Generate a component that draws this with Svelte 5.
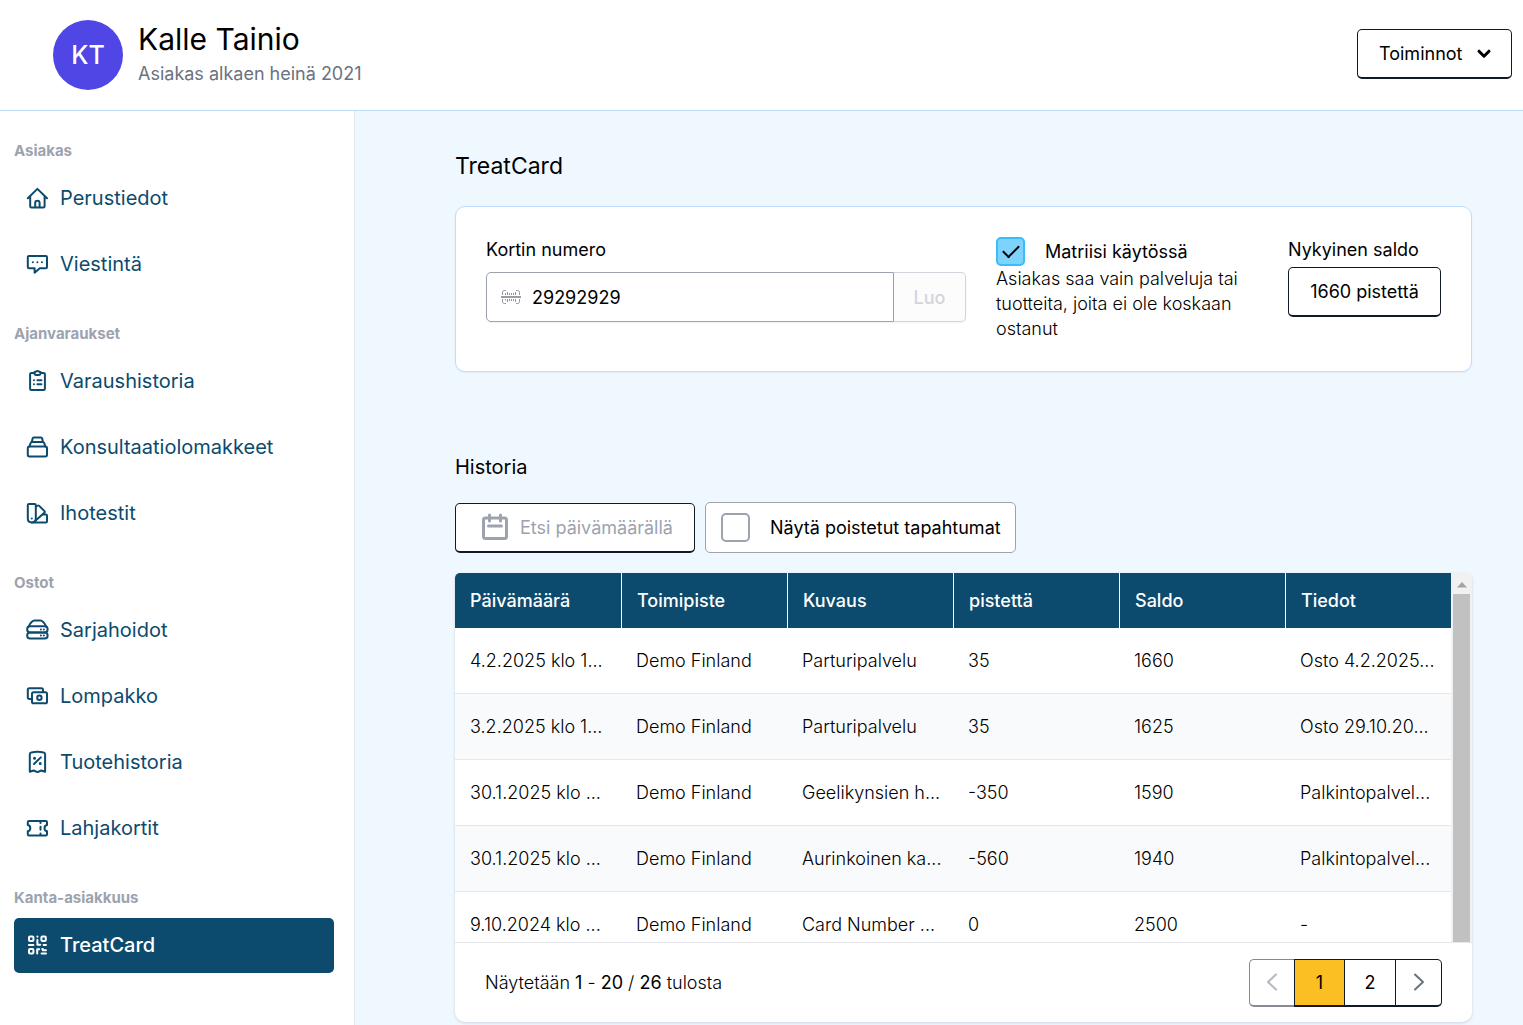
<script lang="ts">
  const GROUPS = [
    {
      title: 'Asiakas',
      items: [
        { icon: 'home', label: 'Perustiedot' },
        { icon: 'chat', label: 'Viestintä' },
      ],
    },
    {
      title: 'Ajanvaraukset',
      items: [
        { icon: 'clipboard', label: 'Varaushistoria' },
        { icon: 'stack', label: 'Konsultaatiolomakkeet' },
        { icon: 'swatch', label: 'Ihotestit' },
      ],
    },
    {
      title: 'Ostot',
      items: [
        { icon: 'series', label: 'Sarjahoidot' },
        { icon: 'wallet', label: 'Lompakko' },
        { icon: 'receipt', label: 'Tuotehistoria' },
        { icon: 'ticket', label: 'Lahjakortit' },
      ],
    },
    {
      title: 'Kanta-asiakkuus',
      items: [{ icon: 'qr', label: 'TreatCard' }],
    },
  ];

  const COLUMNS = ['Päivämäärä', 'Toimipiste', 'Kuvaus', 'pistettä', 'Saldo', 'Tiedot'];

  const ROWS = [
    ['4.2.2025 klo 1...', 'Demo Finland', 'Parturipalvelu', '35', '1660', 'Osto 4.2.2025...'],
    ['3.2.2025 klo 1...', 'Demo Finland', 'Parturipalvelu', '35', '1625', 'Osto 29.10.20...'],
    ['30.1.2025 klo ...', 'Demo Finland', 'Geelikynsien h...', '-350', '1590', 'Palkintopalvel...'],
    ['30.1.2025 klo ...', 'Demo Finland', 'Aurinkoinen ka...', '-560', '1940', 'Palkintopalvel...'],
    ['9.10.2024 klo ...', 'Demo Finland', 'Card Number ...', '0', '2500', '-'],
  ];

  let active = $state('TreatCard');
  let cardNumber = $state('29292929');
  let matrix = $state(true);
  let showDeleted = $state(false);
  let page = $state(1);
</script>

{#snippet icon(name: string)}
  <svg class="icon" viewBox="0 0 22 22" aria-hidden="true">
    {#if name === 'home'}
      <path d="M1.8 11.2 11.4 1.9 21 11.2M4.2 9.6v9.6c0 .7.5 1.2 1.2 1.2h12c.7 0 1.2-.5 1.2-1.2V9.6" />
      <path d="M9.200 20v-4.200c0-1.200 1-2 2.200-2s2.200.8 2.200 2V20" />
    {:else if name === 'chat'}
      <path d="M3 2.9h16.800c.7 0 1.200.5 1.200 1.200v10c0 .7-.5 1.200-1.200 1.200h-6L8.600 19.700v-4.400H3c-.7 0-1.200-.5-1.200-1.200v-10c0-.7.5-1.200 1.200-1.200z" />
      <path class="dots" d="M6.900 9.200h.01M11.400 9.200h.01M15.900 9.200h.01" />
    {:else if name === 'clipboard'}
      <path d="M8 2.900H5.400c-.7 0-1.300.6-1.300 1.300v14.500c0 .7.6 1.300 1.300 1.300h12.200c.7 0 1.300-.6 1.300-1.300V4.200c0-.7-.6-1.300-1.300-1.300H15" />
      <path d="M9.300 1.900c.4-.7 1.200-1 2.200-1s1.800.3 2.200 1h.8v1.700c0 .8-.6 1.400-1.400 1.400H9.900c-.8 0-1.400-.6-1.400-1.400V1.900z" />
      <path d="M11.400 10.300h4M11.400 14.300h4" />
      <path class="dots" d="M8 10.300h.01M8 14.300h.01" />
    {:else if name === 'stack'}
      <rect x="1.8" y="10.6" width="19.2" height="9.8" rx="1.6" />
      <path d="M3.400 10.500 4.700 6.900c.2-.6.600-.9 1.200-.9h11c.6 0 1 .3 1.200.9l1.300 3.600M5.900 5.800l.8-3.500c.1-.6.600-.9 1.200-.9h7c.6 0 1.100.3 1.200.9l.8 3.500" />
    {:else if name === 'swatch'}
      <path d="M3 1.900h5.600c.7 0 1.200.5 1.200 1.200v13.100c0 2.500-1.500 4.200-4 4.200s-4-1.700-4-4.200V3.100c0-.7.5-1.200 1.200-1.200z" />
      <path d="M9.900 4.300l1.900-.7c.5-.2 1-.1 1.400.3l5.300 5.200c.4.4.4 1 .1 1.500L8.600 19.400" />
      <path d="M17 12.600h2.800c.7 0 1.200.5 1.200 1.200v5.400c0 .7-.5 1.200-1.200 1.200h-14" />
      <path class="dots" d="M5.800 16.400h.01" />
    {:else if name === 'series'}
      <rect x="1.200" y="7.200" width="20.400" height="6.200" rx="2.800" />
      <rect x="1.200" y="13.400" width="20.400" height="6.200" rx="2.800" />
      <path d="M2.600 7.700c1.700-3.700 3.500-6.100 6-6.100h5.600c2.500 0 4.300 2.400 6 6.100" />
      <path class="dots" d="M14.900 10.400h.01M17.900 10.400h.01M14.900 16.500h.01M17.900 16.500h.01" />
    {:else if name === 'wallet'}
      <path d="M5 14h-1.600c-.9 0-1.600-.7-1.600-1.600V4.800c0-.9.700-1.600 1.600-1.600h12c.9 0 1.600.7 1.600 1.600v1.600" />
      <rect x="6" y="7.300" width="15" height="11" rx="1.600" />
      <circle cx="13.400" cy="12.800" r="2.200" />
    {:else if name === 'receipt'}
      <path d="M3.800 20.800V3.200c0-1 .6-1.600 1.500-1.800C9 .7 14 .7 17.600 1.400c.9.200 1.500.8 1.500 1.800v17.600l-3.800-1.300-3.800 1.700-3.900-1.700z" />
      <path d="M8 13l6.800-6.600" />
      <path class="dots big" d="M8.500 7.200h.01M14.200 12.500h.01" />
    {:else if name === 'ticket'}
      <path d="M3 4h16.800c.7 0 1.200.5 1.200 1.200v2.900c-1.600.3-2.500 1.500-2.500 3.100s.9 2.800 2.500 3.100v2.900c0 .7-.5 1.200-1.200 1.200H3c-.7 0-1.200-.5-1.200-1.200v-2.900c1.600-.3 2.500-1.500 2.500-3.100S3.400 8.400 1.800 8.100V5.200C1.800 4.500 2.300 4 3 4z" />
      <path d="M14.500 4.500v1.500M14.500 9.700v3M14.500 16.500v1.500" />
    {:else}
      <rect x="3" y="2.600" width="4.400" height="4.400" rx="1" />
      <rect x="15.400" y="2.600" width="4.400" height="4.400" rx="1" />
      <rect x="3" y="15" width="4.400" height="4.400" rx="1" />
      <path d="M11.400 2.600v.1M11.400 6v4.800h2.800M2.900 11h4.500M17.600 11h2.400M11.200 19.400v-4.200h2M16.200 15h.6v1.200h3.200M15.600 19.500h4.400" />
    {/if}
  </svg>
{/snippet}

<div class="app">
  <header class="topbar">
    <div class="avatar">KT</div>
    <div class="who">
      <h1>Kalle Tainio</h1>
      <p>Asiakas alkaen heinä 2021</p>
    </div>
    <button class="btn actions">
      Toiminnot
      <svg class="caret" viewBox="0 0 14 10" aria-hidden="true"><path d="M2 2.200 7 7.200l5-5" /></svg>
    </button>
  </header>

  <div class="body">
    <nav class="sidebar">
      {#each GROUPS as g}
        <section class="group">
          <h2>{g.title}</h2>
          <ul>
            {#each g.items as it}
              <li>
                <a href="#{it.icon}" class:active={active === it.label} onclick={() => (active = it.label)}>
                  {@render icon(it.icon)}
                  <span>{it.label}</span>
                </a>
              </li>
            {/each}
          </ul>
        </section>
      {/each}
    </nav>

    <main>
      <h2 class="title">TreatCard</h2>

      <section class="card">
        <div class="number">
          <label for="card-number">Kortin numero</label>
          <div class="field">
            <div class="input-wrap">
              <svg class="barcode" viewBox="0 0 20 14" aria-hidden="true">
                <path class="frame" d="M1.500 5V2.500C1.500 1.200 2.200.5 3.500.5h1.500M1.500 9v2.500c0 1.300.7 2 2 2h1.500M18.500 5V2.500c0-1.300-.7-2-2-2h-1.500M18.500 9v2.500c0 1.300-.7 2-2 2h-1.500" />
                <path class="line" d="M0 7h20" />
                <path class="bars" d="M4.500 3v2M6.500 2v3M8.500 3v2M10.500 3v2M12.500 3v2M14.500 2v3M4.500 9v1.500M6.500 9v3M8.500 9v2M10.500 9v2M12.500 9v2M14.500 9v3" />
              </svg>
              <input id="card-number" type="text" bind:value={cardNumber} />
            </div>
            <button class="create" disabled>Luo</button>
          </div>
        </div>

        <div class="matrix">
          <label class="check">
            <input type="checkbox" bind:checked={matrix} />
            Matriisi käytössä
          </label>
          <p>Asiakas saa vain palveluja tai tuotteita, joita ei ole koskaan ostanut</p>
        </div>

        <div class="balance">
          <span>Nykyinen saldo</span>
          <button class="btn">1660 pistettä</button>
        </div>
      </section>

      <h3>Historia</h3>

      <div class="filters">
        <button class="btn date">
          <svg viewBox="0 0 26 26" aria-hidden="true">
            <rect x="1.500" y="4" width="23" height="20.500" rx="2" />
            <path d="M7.500 1v6M18.500 1v6M6.500 12h13" />
          </svg>
          Etsi päivämäärällä
        </button>
        <label class="check boxed">
          <input type="checkbox" bind:checked={showDeleted} />
          Näytä poistetut tapahtumat
        </label>
      </div>

      <section class="history">
        <div class="scroller">
          <div class="viewport">
            <table>
              <thead>
                <tr>
                  {#each COLUMNS as c}
                    <th scope="col">{c}</th>
                  {/each}
                </tr>
              </thead>
              <tbody>
                {#each ROWS as r}
                  <tr>
                    {#each r as cell}
                      <td>{cell}</td>
                    {/each}
                  </tr>
                {/each}
              </tbody>
            </table>
          </div>
          <div class="track" aria-hidden="true">
            <svg viewBox="0 0 10 6"><path d="M5 0l5 5.500H0z" /></svg>
            <div class="thumb"></div>
          </div>
        </div>

        <footer>
          <p>Näytetään <b>1</b> - <b>20</b> / <b>26</b> tulosta</p>
          <div class="pager">
            <button disabled={page === 1} aria-label="Edellinen" onclick={() => (page -= 1)}>
              <svg viewBox="0 0 12 18" aria-hidden="true"><path d="M10 1.500 2 9l8 7.500" /></svg>
            </button>
            {#each [1, 2] as n}
              <button class="num" class:current={page === n} onclick={() => (page = n)}>{n}</button>
            {/each}
            <button disabled={page === 2} aria-label="Seuraava" onclick={() => (page += 1)}>
              <svg viewBox="0 0 12 18" aria-hidden="true"><path d="M2 1.500 10 9l-8 7.500" /></svg>
            </button>
          </div>
        </footer>
      </section>
    </main>
  </div>
</div>

<style>
  :global(body) {
    margin: 0;
    background: #fff;
  }
  .app {
    display: flex;
    flex-direction: column;
    min-height: 100vh;
    font-family: Inter, sans-serif;
    font-size: 18px;
    line-height: 25px;
    color: #000;
  }
  .app :global(*) {
    box-sizing: border-box;
  }
  h1,
  h2,
  h3,
  p,
  ul {
    margin: 0;
    padding: 0;
    font-weight: 400;
  }
  button,
  input {
    font: inherit;
    color: inherit;
    margin: 0;
  }
  svg {
    display: block;
    flex: none;
    fill: none;
    stroke: currentColor;
    stroke-linecap: round;
    stroke-linejoin: round;
    overflow: visible;
  }

  .topbar {
    display: flex;
    align-items: center;
    height: 111px;
    padding: 0 11px 0 53px;
    border-bottom: 1px solid #bfdbfe;
  }
  .avatar {
    display: grid;
    place-items: center;
    width: 70px;
    height: 70px;
    margin-right: 15px;
    border-radius: 50%;
    background: #4f46e5;
    color: #fff;
    font-size: 25px;
    font-weight: 500;
  }
  .who {
    flex: 1;
    padding-bottom: 3px;
  }
  .who h1 {
    font-size: 30px;
    line-height: 40px;
  }
  .who p {
    color: #6b7280;
    line-height: 29px;
  }
  .btn {
    height: 50px;
    padding: 0 20px;
    background: #fff;
    border: 1px solid #111827;
    border-bottom-width: 2px;
    border-radius: 5px;
    cursor: pointer;
  }
  .actions {
    display: flex;
    align-items: center;
    justify-content: space-between;
    width: 155px;
    padding: 0 20px 0 21px;
    margin-bottom: 2px;
  }
  .caret {
    width: 14px;
    height: 10px;
    stroke-width: 3;
  }

  .body {
    display: flex;
    flex: 1;
  }
  .sidebar {
    flex: none;
    width: 355px;
    padding: 30px 20px 0 14px;
    border-right: 1px solid #e2e8f0;
  }
  .group {
    margin-bottom: 32px;
  }
  .group h2 {
    margin-bottom: 10px;
    font-size: 15px;
    line-height: 20px;
    font-weight: 700;
    color: #9ca3af;
  }
  .group ul {
    display: flex;
    flex-direction: column;
    gap: 11px;
    list-style: none;
  }
  .group a {
    display: flex;
    align-items: center;
    gap: 12px;
    height: 55px;
    padding: 0 12px;
    border-radius: 5px;
    color: #0c4a6e;
    font-size: 20px;
    text-decoration: none;
  }
  .group a.active {
    background: #0c4a6e;
    color: #fff;
    font-weight: 500;
  }
  .icon {
    width: 22px;
    height: 22px;
    margin-bottom: 1px;
    stroke-width: 2;
  }
  .dots {
    stroke-width: 2;
  }
  .dots.big {
    stroke-width: 3;
  }

  main {
    flex: 1;
    min-width: 0;
    padding: 40px 51px 4px 100px;
    background: #f0f8ff;
  }
  .title {
    margin-bottom: 25px;
    font-size: 23px;
    line-height: 30px;
  }
  .card {
    display: grid;
    grid-template-columns: minmax(0, 1fr) 262px 153px;
    gap: 30px;
    min-height: 166px;
    padding: 30px;
    background: #fff;
    border: 1px solid #bfdbfe;
    border-radius: 10px;
    box-shadow: 0 1px 2px rgba(0, 0, 0, 0.05);
  }
  .number label {
    display: block;
    margin-bottom: 10px;
  }
  .field {
    display: flex;
  }
  .input-wrap {
    display: flex;
    flex: 1;
    align-items: center;
    gap: 11px;
    height: 50px;
    padding-left: 14px;
    border: 1px solid #9ca3af;
    border-radius: 5px 0 0 5px;
    box-shadow: 0 1px 2px rgba(0, 0, 0, 0.05);
  }
  .barcode {
    width: 20px;
    height: 14px;
    color: #6b7280;
    stroke-width: 1;
    stroke-linecap: butt;
  }
  .barcode .frame,
  .barcode .bars {
    opacity: 0.75;
  }
  .barcode .line {
    stroke-width: 2;
    opacity: 0.7;
  }
  .input-wrap input {
    flex: 1;
    min-width: 0;
    padding: 0;
    border: 0;
    outline: 0;
    background: none;
  }
  .create {
    width: 72px;
    border: 1px solid #d1d5db;
    border-left: 0;
    border-radius: 0 5px 5px 0;
    background: #fcfcfc;
    color: #d1d5db;
    font-weight: 500;
    box-shadow: 0 1px 2px rgba(0, 0, 0, 0.05);
  }
  .check {
    display: flex;
    align-items: center;
    gap: 20px;
    white-space: nowrap;
    cursor: pointer;
  }
  .check input {
    display: grid;
    place-items: center;
    appearance: none;
    flex: none;
    width: 29px;
    height: 29px;
    border: 2px solid #9ca3af;
    border-radius: 5px;
    background: #fff;
  }
  .check input:checked {
    border-color: #38bdf8;
    background: #7dd3fc;
  }
  .check input:checked::before {
    content: '';
    width: 14px;
    height: 7px;
    margin-bottom: 4px;
    border: solid #000;
    border-width: 0 0 2px 2px;
    transform: rotate(-45deg);
  }
  .matrix p {
    font-weight: 300;
  }
  .balance {
    display: flex;
    flex-direction: column;
    gap: 5px;
  }
  h3 {
    margin: 80px 0 20px;
    font-size: 20px;
    line-height: 30px;
  }
  .filters {
    display: flex;
    align-items: center;
    gap: 10px;
    margin-bottom: 20px;
  }
  .date {
    display: flex;
    align-items: center;
    gap: 12px;
    width: 240px;
    padding: 0 20px 0 26px;
    color: #9ca3af;
    white-space: nowrap;
  }
  .date svg {
    width: 26px;
    height: 26px;
    stroke-width: 3;
  }
  .boxed {
    width: 311px;
    height: 51px;
    padding: 0 15px;
    background: #fff;
    border: 1px solid #9ca3af;
    border-radius: 5px;
  }

  .history {
    overflow: hidden;
    background: #fff;
    border-radius: 5px 5px 10px 10px;
    box-shadow: 0 1px 3px rgba(0, 0, 0, 0.15);
  }
  .scroller {
    display: flex;
    height: 370px;
    border-bottom: 1px solid #e5e7eb;
  }
  .viewport {
    flex: 1;
    min-width: 0;
    overflow: hidden;
  }
  table {
    width: 100%;
    table-layout: fixed;
    border-collapse: separate;
    border-spacing: 0;
  }
  th,
  td {
    padding: 0 0 0 15px;
    text-align: left;
    white-space: nowrap;
  }
  th {
    height: 55px;
    background: #0c4a6e;
    color: #fff;
    font-weight: 500;
  }
  th + th {
    border-left: 1px solid #fff;
  }
  td {
    height: 66px;
    font-weight: 300;
    border-bottom: 1px solid #e5e7eb;
  }
  tbody tr:nth-child(even) {
    background: #f9fafb;
  }
  .track {
    display: flex;
    flex-direction: column;
    align-items: center;
    width: 21px;
    padding-top: 9px;
    background: #f1f1f1;
  }
  .track svg {
    width: 10px;
    height: 6px;
    margin-bottom: 6px;
    fill: #a3a3a3;
    stroke: none;
  }
  .thumb {
    flex: 1;
    width: 17px;
    background: #c1c1c1;
  }
  footer {
    display: flex;
    align-items: center;
    justify-content: space-between;
    height: 79px;
    padding: 0 30px;
  }
  footer p {
    font-weight: 300;
  }
  footer b {
    font-weight: 400;
  }
  .pager {
    display: flex;
    height: 48px;
  }
  .pager button {
    display: grid;
    place-items: center;
    width: 46px;
    padding: 0;
    background: #fff;
    border: 1px solid #111827;
    border-bottom-width: 2px;
    color: #6b7280;
  }
  .pager button:first-child {
    width: 45px;
    border-right: 0;
    border-radius: 5px 0 0 5px;
  }
  .pager button:last-child {
    border-left: 0;
    border-radius: 0 5px 5px 0;
  }
  .pager button:disabled {
    opacity: 0.5;
  }
  .pager .num {
    width: 51px;
    color: #000;
  }
  .pager .num + .num {
    border-left: 0;
  }
  .pager .current {
    background: #fbbf24;
  }
  .pager svg {
    width: 12px;
    height: 18px;
    stroke-width: 2;
  }
</style>
